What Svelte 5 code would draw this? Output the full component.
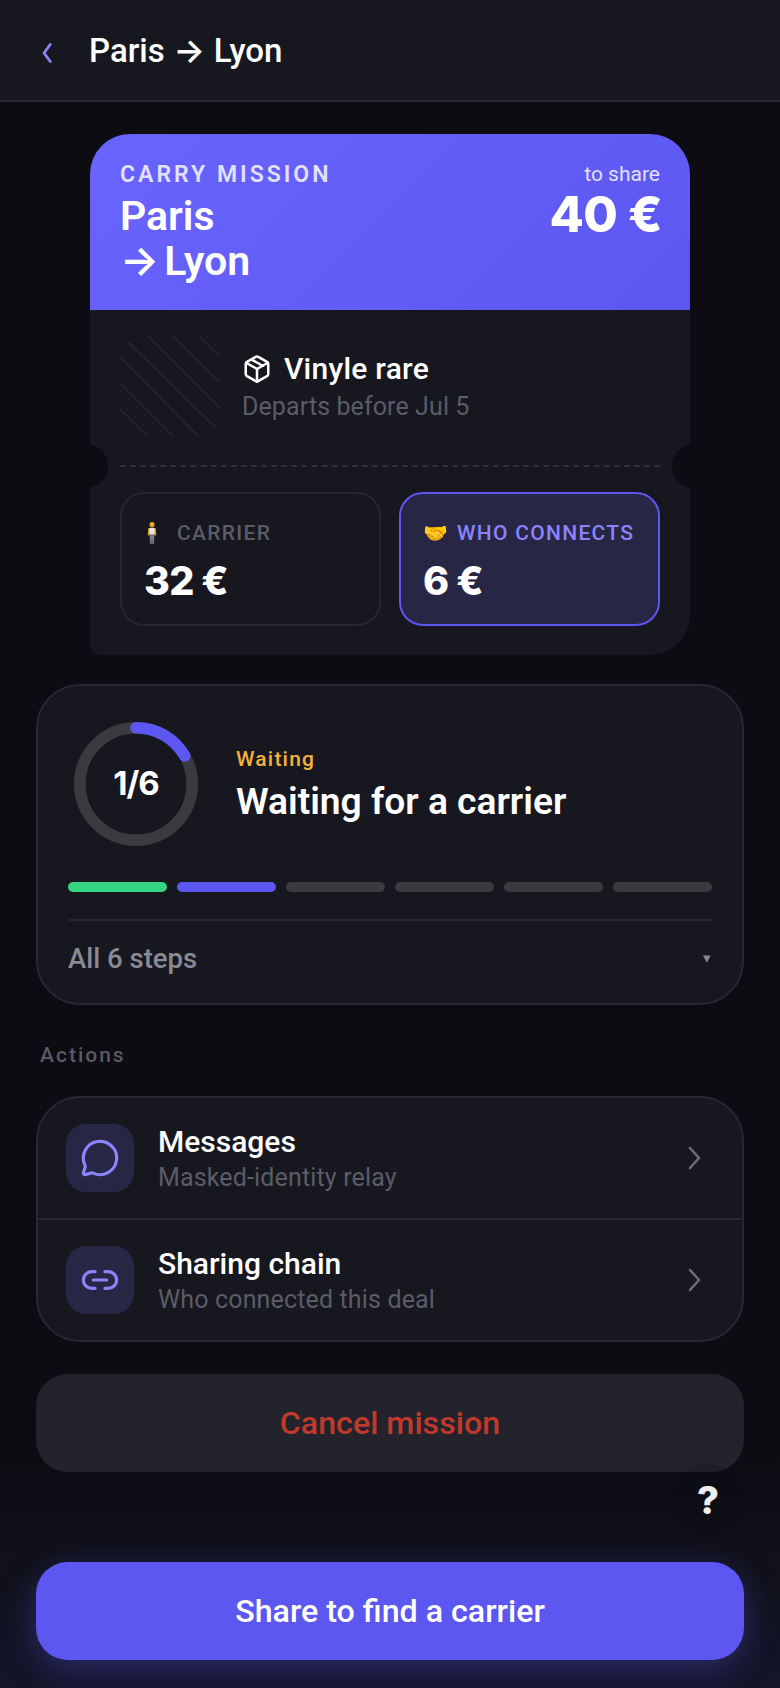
<script>
	const steps = ['done', 'current', 'todo', 'todo', 'todo', 'todo'];
	const hatch = [
		[79, 0, 100, 21],
		[53, 0, 100, 47],
		[28, 0, 100, 72],
		[8, 6, 95, 91],
		[0, 21, 78, 100],
		[0, 47, 53, 100],
		[0, 73, 27, 100]
	];
</script>

<div class="screen">
	<header class="topbar">
		<button class="back" aria-label="Back">
			<svg width="16" height="28" viewBox="0 0 16 28" fill="none">
				<path d="M13 7.5 L6 17 L13 26.5" stroke="#8b84ff" stroke-width="2.8" stroke-linejoin="round" />
			</svg>
		</button>
		<h1>Paris <span class="arrow">→</span> Lyon</h1>
	</header>

	<main>
		<section class="ticket">
			<div class="ticket-head">
				<div>
					<div class="kind">CARRY MISSION</div>
					<h2>Paris<br /><span class="arrow">→</span> Lyon</h2>
				</div>
				<div class="pot">
					<div class="pot-label">to share</div>
					<div class="pot-value">40 €</div>
				</div>
			</div>
			<div class="ticket-body">
				<div class="item">
					<svg class="hatch" width="100" height="100" viewBox="0 0 100 100">
						{#each hatch as [x1, y1, x2, y2]}
							<line {x1} {y1} {x2} {y2} stroke="#272833" stroke-width="1.5" />
						{/each}
					</svg>
					<div>
						<div class="item-name">
							<svg width="30" height="30" viewBox="0 0 24 24" fill="none" stroke="#fff" stroke-width="2" stroke-linecap="round" stroke-linejoin="round">
								<path d="M21 8a2 2 0 0 0-1-1.73l-7-4a2 2 0 0 0-2 0l-7 4A2 2 0 0 0 3 8v8a2 2 0 0 0 1 1.73l7 4a2 2 0 0 0 2 0l7-4A2 2 0 0 0 21 16Z" />
								<path d="M3.3 7 12 12l8.7-5" />
								<path d="M12 22V12" />
								<path d="m7.5 4.27 9 5.15" />
							</svg>
							<span>Vinyle rare</span>
						</div>
						<div class="item-sub">Departs before Jul 5</div>
					</div>
				</div>
				<div class="tear"></div>
				<div class="split">
					<div class="share">
						<div class="share-label">
							<svg class="person" width="10" height="22" viewBox="0 0 10 22">
								<circle cx="5" cy="2.6" r="2.5" fill="#f0ad24" />
								<path d="M1.2 6.4 Q5 4.6 8.8 6.4 L9.2 13.5 L7.8 13.5 L7.5 12.5 L2.5 12.5 L2.2 13.5 L0.8 13.5 Z" fill="#e9a826" />
								<rect x="2.6" y="6" width="4.8" height="6.5" fill="#e6e6e6" />
								<path d="M2.6 12.5 H7.4 L7 22 H5.4 L5 15 L4.6 22 H3 Z" fill="#7d7f86" />
							</svg>
							CARRIER
						</div>
						<div class="share-value">32 €</div>
					</div>
					<div class="share mine">
						<div class="share-label"><span class="emoji">🤝</span> WHO CONNECTS</div>
						<div class="share-value">6 €</div>
					</div>
				</div>
			</div>
		</section>

		<section class="status">
			<div class="status-top">
				<div class="ring">
					<svg width="124" height="124" viewBox="0 0 124 124" fill="none">
						<circle cx="62" cy="62" r="56.2" stroke="#3a3b3f" stroke-width="11.6" />
						<path d="M62 5.8 A56.2 56.2 0 0 1 110.7 33.9" stroke="#5b57f0" stroke-width="11.6" stroke-linecap="round" />
					</svg>
					<span>1/6</span>
				</div>
				<div>
					<div class="status-tag">Waiting</div>
					<div class="status-title">Waiting for a carrier</div>
				</div>
			</div>
			<div class="bars">
				{#each steps as s}
					<div class="bar {s}"></div>
				{/each}
			</div>
			<div class="steps-toggle">
				<span>All 6 steps</span>
				<span class="caret">▾</span>
			</div>
		</section>

		<div class="section-label">Actions</div>

		<section class="actions">
			<div class="row">
				<div class="tile">
					<svg width="40" height="40" viewBox="0 0 24 24" fill="none" stroke="#8b84ff" stroke-width="1.9" stroke-linecap="round" stroke-linejoin="round">
						<path d="M2.992 16.342a2 2 0 0 1 .094 1.167l-1.065 3.29a1 1 0 0 0 1.236 1.168l3.413-.998a2 2 0 0 1 1.099.092 10 10 0 1 0-4.777-4.719" />
					</svg>
				</div>
				<div class="row-text">
					<div class="row-title">Messages</div>
					<div class="row-sub">Masked-identity relay</div>
				</div>
				<svg class="chev" width="16" height="24" viewBox="0 0 16 24" fill="none">
					<path d="M4 2 L13 12 L4 22" stroke="#6b6c78" stroke-width="2.6" stroke-linecap="round" stroke-linejoin="round" />
				</svg>
			</div>
			<div class="row">
				<div class="tile">
					<svg width="40" height="40" viewBox="0 0 24 24" fill="none" stroke="#8b84ff" stroke-width="1.9" stroke-linecap="round" stroke-linejoin="round">
						<path d="M9 17H7A5 5 0 0 1 7 7h2" />
						<path d="M15 7h2a5 5 0 1 1 0 10h-2" />
						<line x1="8" y1="12" x2="16" y2="12" />
					</svg>
				</div>
				<div class="row-text">
					<div class="row-title">Sharing chain</div>
					<div class="row-sub">Who connected this deal</div>
				</div>
				<svg class="chev" width="16" height="24" viewBox="0 0 16 24" fill="none">
					<path d="M4 2 L13 12 L4 22" stroke="#6b6c78" stroke-width="2.6" stroke-linecap="round" stroke-linejoin="round" />
				</svg>
			</div>
		</section>

		<button class="cancel">Cancel mission</button>
		<button class="cta">Share to find a carrier</button>
		<button class="help">?</button>
	</main>
</div>

<style>
	:global(body) {
		background: #0c0c12;
	}

	.screen {
		width: 780px;
		height: 1688px;
		overflow: hidden;
		font-family: Roboto, 'Liberation Sans', sans-serif;
		color: #fff;
		background: linear-gradient(#0c0c12 85%, #10111a 93%, #14152a 100%);
	}

	button {
		font-family: inherit;
		border: none;
		cursor: pointer;
	}

	.arrow {
		font-family: Inter, sans-serif;
		font-weight: 600;
	}

	.topbar {
		height: 100px;
		display: flex;
		align-items: center;
		gap: 27px;
		padding-left: 38px;
		background: #16171f;
		border-bottom: 2px solid #2a2b30;
	}

	.back {
		background: none;
		padding: 0;
		width: 24px;
		display: flex;
	}

	h1 {
		margin: 0;
		font-size: 33px;
		font-weight: 500;
		word-spacing: 0.5px;
	}

	main {
		position: relative;
		padding: 32px 36px 0;
	}

	.ticket {
		position: relative;
		width: 600px;
		margin: 0 auto;
		border-radius: 40px 40px 40px 12px;
		overflow: hidden;
		background: #16171f;
	}

	.ticket-head {
		height: 176px;
		box-sizing: border-box;
		padding: 27px 30px 0;
		display: flex;
		justify-content: space-between;
		background: linear-gradient(135deg, #6a64ff, #5b57f0);
	}

	.kind {
		font-size: 23px;
		font-weight: 600;
		letter-spacing: 3px;
		line-height: 27px;
		color: #e3e1ff;
	}

	h2 {
		margin: 6px 0 0;
		font-size: 41px;
		font-weight: 600;
		line-height: 44px;
		word-spacing: -5px;
	}

	.pot {
		text-align: right;
	}

	.pot-label {
		font-size: 21px;
		line-height: 26px;
		color: #e3e1ff;
	}

	.pot-value {
		font-family: Inter, sans-serif;
		font-size: 50px;
		font-weight: 800;
		letter-spacing: -0.5px;
		line-height: 46px;
		margin: 4px -2px 0 0;
	}

	.ticket-body {
		position: relative;
		padding: 26px 30px 29px;
	}

	.item {
		display: flex;
		align-items: center;
		gap: 22px;
		height: 100px;
	}

	.hatch {
		flex: none;
	}

	.item-name {
		display: flex;
		align-items: center;
		gap: 12px;
		font-size: 30px;
		font-weight: 500;
		letter-spacing: 0.25px;
		line-height: 38px;
	}

	.item-sub {
		margin-top: 3px;
		font-size: 25px;
		letter-spacing: 0.1px;
		line-height: 32px;
		color: #5b5c68;
	}

	.tear {
		margin-top: 29px;
		border-top: 2px dashed #2e2f38;
		position: relative;
	}

	.tear::before,
	.tear::after {
		content: '';
		position: absolute;
		top: -23px;
		width: 44px;
		height: 44px;
		border-radius: 50%;
		background: #0c0c12;
	}

	.tear::before {
		left: -56px;
	}

	.tear::after {
		right: -56px;
	}

	.split {
		display: flex;
		gap: 18px;
		margin-top: 25px;
	}

	.share {
		flex: 1 1 0;
		height: 134px;
		box-sizing: border-box;
		padding: 24px 22px 0;
		border: 2px solid #26272c;
		border-radius: 24px;
	}

	.mine {
		background: #272745;
		border-color: #5b57f0;
	}

	.share-label {
		display: flex;
		align-items: center;
		gap: 9px;
		height: 30px;
		font-size: 21px;
		font-weight: 500;
		letter-spacing: 1.3px;
		color: #5b5c68;
		white-space: nowrap;
	}

	.mine .share-label {
		color: #8b84ff;
	}

	.person {
		margin: 0 11px 0 3px;
	}

	.emoji {
		letter-spacing: 0;
		font-size: 20px;
	}

	.share-value {
		margin-top: 10px;
		font-family: Inter, sans-serif;
		font-size: 39.5px;
		font-weight: 800;
		letter-spacing: -0.8px;
		line-height: 46px;
	}

	.status {
		margin-top: 29px;
		padding: 0 30px;
		height: 321px;
		box-sizing: border-box;
		border: 2px solid #282930;
		border-radius: 44px;
		background: #16171f;
	}

	.status-top {
		display: flex;
		align-items: center;
		gap: 38px;
		padding: 36px 0 0 6px;
	}

	.ring {
		position: relative;
		width: 124px;
		height: 124px;
		flex: none;
		display: flex;
		align-items: center;
		justify-content: center;
		padding-bottom: 2px;
		box-sizing: border-box;
		font-family: Inter, sans-serif;
		font-size: 33px;
		font-weight: 700;
		letter-spacing: -1px;
	}

	.ring svg {
		position: absolute;
		inset: 0;
	}

	.status-tag {
		font-size: 21px;
		letter-spacing: 1.2px;
		line-height: 28px;
		font-weight: 500;
		color: #f5b13c;
	}

	.status-title {
		margin-top: 6px;
		font-size: 37.2px;
		font-weight: 600;
		line-height: 44px;
	}

	.bars {
		display: flex;
		gap: 10px;
		margin-top: 36px;
	}

	.bar {
		flex: 1;
		height: 10px;
		border-radius: 5px;
		background: #3a3b3f;
	}

	.bar.done {
		background: #36d583;
	}

	.bar.current {
		background: #5b57f0;
	}

	.steps-toggle {
		display: flex;
		justify-content: space-between;
		align-items: center;
		margin-top: 27px;
		border-top: 2px solid #26272c;
		height: 74px;
		font-size: 27.5px;
		font-weight: 500;
		color: #8a8a96;
	}

	.caret {
		font-size: 15px;
		margin-right: 1px;
	}

	.section-label {
		margin: 36px 0 0 4px;
		font-size: 21px;
		line-height: 28px;
		font-weight: 500;
		letter-spacing: 2px;
		color: #5a5b66;
	}

	.actions {
		margin-top: 27px;
		border: 2px solid #282930;
		border-radius: 44px;
		background: #16171f;
		overflow: hidden;
	}

	.row {
		display: flex;
		align-items: center;
		gap: 24px;
		height: 120px;
		padding: 0 40px 0 28px;
	}

	.row + .row {
		border-top: 2px solid #2a2b30;
	}

	.tile {
		width: 68px;
		height: 68px;
		flex: none;
		display: flex;
		align-items: center;
		justify-content: center;
		border-radius: 20px;
		background: #272745;
	}

	.row-text {
		flex: 1;
	}

	.row-title {
		font-size: 30px;
		font-weight: 500;
		line-height: 38px;
	}

	.row-sub {
		margin-top: 1px;
		font-size: 25px;
		letter-spacing: 0.15px;
		line-height: 32px;
		color: #5b5c68;
	}

	.cancel,
	.cta {
		display: block;
		width: 100%;
		height: 98px;
		border-radius: 32px;
		font-size: 32.2px;
		font-weight: 500;
	}

	.cancel {
		margin-top: 32px;
		background: #22232c;
		color: #c0392b;
	}

	.cta {
		margin-top: 90px;
		background: #5b57f0;
		color: #fff;
		box-shadow: 0 8px 32px rgba(91, 87, 240, 0.35);
	}

	.help {
		position: absolute;
		right: 36px;
		bottom: 124px;
		width: 72px;
		height: 72px;
		border-radius: 50%;
		background: rgba(12, 12, 18, 0.2);
		color: #eee;
		font-family: Inter, sans-serif;
		font-size: 38px;
		font-weight: 800;
	}
</style>
